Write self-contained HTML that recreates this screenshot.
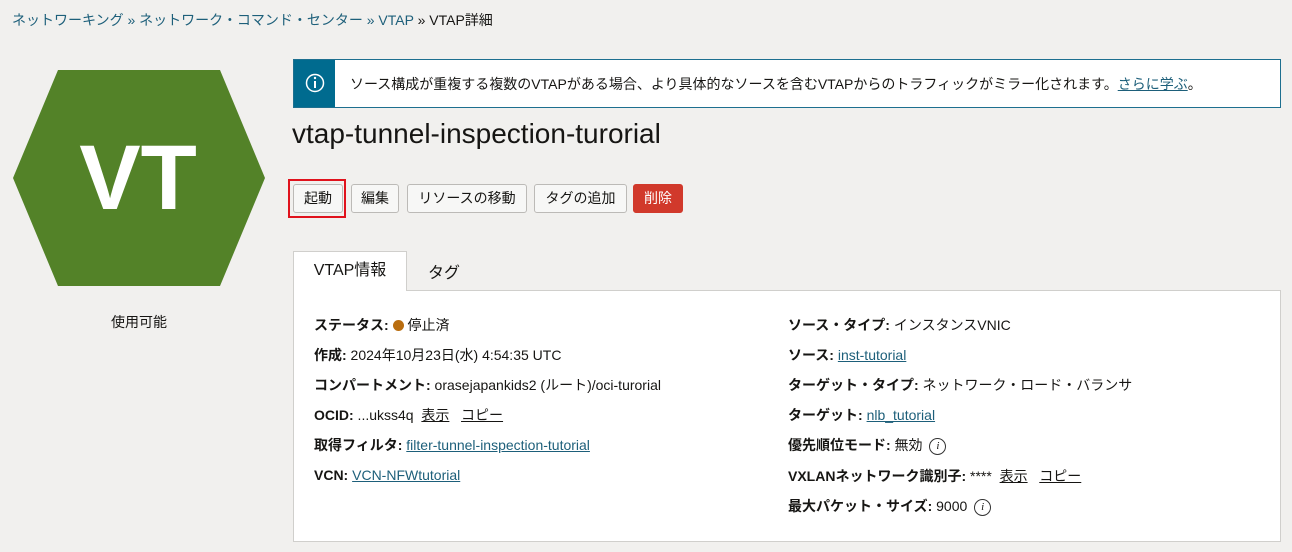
<!DOCTYPE html>
<html><head><meta charset="utf-8"><style>
body{margin:0;width:1292px;height:552px;background:#f1f0ee;font-family:"Liberation Sans","Noto Sans CJK JP",sans-serif;color:#161513;position:relative;overflow:hidden;font-size:14px}
.a{position:absolute}
a{color:#1d5f7a;text-decoration:underline}
.bc{left:12px;top:10px;font-size:14px;color:#1d5f7a}
.bc span{color:#161513}
.info{left:293px;top:59px;width:988px;height:49px;border:1px solid #1d6f8f;background:#fff;box-sizing:border-box}
.info .band{position:absolute;left:0;top:0;width:41px;height:47px;background:#006b8f}
.info .txt{position:absolute;left:56px;top:14px;font-size:14px}
.btn{position:absolute;top:184px;height:29px;border:1px solid #bcbab7;background:#f7f7f6;border-radius:3px;box-sizing:border-box;font-size:14px;line-height:27px;text-align:center}
.lbl{font-weight:bold}
.row{position:absolute;font-size:14px}
.ic{display:inline-block;width:15px;height:15px;border:1.5px solid #333;border-radius:50%;font-size:11px;line-height:15px;text-align:center;font-style:italic;font-family:"Liberation Serif",serif;vertical-align:middle;margin-left:3px}
</style></head><body>
<div class="a bc">ネットワーキング » ネットワーク・コマンド・センター » VTAP <span>» VTAP詳細</span></div>
<svg class="a" style="left:12px;top:69px" width="254" height="218"><polygon points="46,1 208,1 253,109 208,217 46,217 1,109" fill="#538228"/><text x="126" y="140" text-anchor="middle" font-family="Liberation Sans" font-weight="bold" font-size="92" fill="#fff">VT</text></svg>
<div class="a" style="left:111px;top:312px;font-size:14px">使用可能</div>
<div class="a info"><div class="band"><svg width="41" height="47"><circle cx="21" cy="23" r="8.5" fill="none" stroke="#fff" stroke-width="1.5"/><rect x="20" y="21" width="2" height="7" fill="#fff"/><circle cx="21" cy="18" r="1.2" fill="#fff"/></svg></div><div class="txt">ソース構成が重複する複数のVTAPがある場合、より具体的なソースを含むVTAPからのトラフィックがミラー化されます。<a>さらに学ぶ</a>。</div></div>
<div class="a" style="left:292px;top:118px;font-size:28px;color:#161513">vtap-tunnel-inspection-turorial</div>
<div class="btn" style="left:293px;width:50px">起動</div>
<div class="a" style="left:288px;top:179px;width:58px;height:39px;border:2px solid #e0121c;box-sizing:border-box"></div>
<div class="btn" style="left:351px;width:48px">編集</div>
<div class="btn" style="left:407px;width:120px">リソースの移動</div>
<div class="btn" style="left:534px;width:93px">タグの追加</div>
<div class="btn" style="left:633px;width:50px;background:#d1392b;border-color:#d1392b;color:#fff">削除</div>
<div class="a" style="left:293px;top:251px;width:114px;height:40px;background:#fff;border:1px solid #d0cfcc;border-bottom:none;box-sizing:border-box;z-index:2;text-align:center;line-height:38px;font-size:16px">VTAP情報</div>
<div class="a" style="left:428px;top:259px;font-size:16px">タグ</div>
<div class="a" style="left:293px;top:290px;width:988px;height:252px;background:#fff;border:1px solid #d0cfcc;box-sizing:border-box"></div>
<div class="row" style="left:314px;top:315px"><span class="lbl">ステータス:</span> <span style="display:inline-block;width:11px;height:11px;border-radius:50%;background:#b96d0f;vertical-align:-1px"></span> 停止済</div>
<div class="row" style="left:314px;top:345px"><span class="lbl">作成:</span> 2024年10月23日(水) 4:54:35 UTC</div>
<div class="row" style="left:314px;top:375px"><span class="lbl">コンパートメント:</span> orasejapankids2 (ルート)/oci-turorial</div>
<div class="row" style="left:314px;top:405px"><span class="lbl">OCID:</span> ...ukss4q &nbsp;<u>表示</u>&nbsp;&nbsp; <u>コピー</u></div>
<div class="row" style="left:314px;top:435px"><span class="lbl">取得フィルタ:</span> <a>filter-tunnel-inspection-tutorial</a></div>
<div class="row" style="left:314px;top:467px"><span class="lbl">VCN:</span> <a>VCN-NFWtutorial</a></div>
<div class="row" style="left:788px;top:315px"><span class="lbl">ソース・タイプ:</span> インスタンスVNIC</div>
<div class="row" style="left:788px;top:345px"><span class="lbl">ソース:</span> <a>inst-tutorial</a></div>
<div class="row" style="left:788px;top:375px"><span class="lbl">ターゲット・タイプ:</span> ネットワーク・ロード・バランサ</div>
<div class="row" style="left:788px;top:405px"><span class="lbl">ターゲット:</span> <a>nlb_tutorial</a></div>
<div class="row" style="left:788px;top:435px"><span class="lbl">優先順位モード:</span> 無効 <span class="ic">i</span></div>
<div class="row" style="left:788px;top:466px"><span class="lbl">VXLANネットワーク識別子:</span> **** &nbsp;<u>表示</u>&nbsp;&nbsp; <u>コピー</u></div>
<div class="row" style="left:788px;top:496px"><span class="lbl">最大パケット・サイズ:</span> 9000 <span class="ic">i</span></div>
</body></html>
